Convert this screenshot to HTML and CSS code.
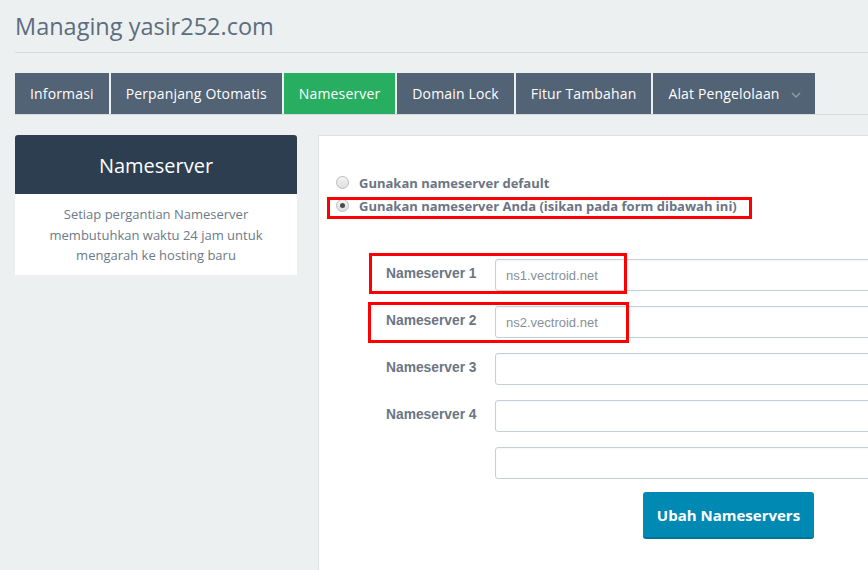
FILE: index.html
```html
<!DOCTYPE html>
<html lang="id">
<head>
    <meta charset="UTF-8">
    <title>Managing yasir252.com</title>
    <link rel="stylesheet" href="styles.css">
</head>
<body>
    <h1 class="page-title">Managing yasir252.com</h1>

    <ul class="tabs">
        <li class="tab">Informasi</li>
        <li class="tab">Perpanjang Otomatis</li>
        <li class="tab active">Nameserver</li>
        <li class="tab">Domain Lock</li>
        <li class="tab">Fitur Tambahan</li>
        <li class="tab dropdown">Alat Pengelolaan
            <svg class="caret" width="10" height="6" viewBox="0 0 10 6"><polyline points="1,1 5,5 9,1" fill="none" stroke="#8a97a5" stroke-width="1.6"/></svg>
        </li>
    </ul>

    <div class="layout">
        <div class="side-panel">
            <div class="side-head">Nameserver</div>
            <div class="side-body">Setiap pergantian Nameserver membutuhkan waktu 24 jam untuk mengarah ke hosting baru</div>
        </div>

        <div class="main-panel">
            <div class="radio-row"><span class="radio"></span>Gunakan nameserver default</div>
            <div class="radio-row"><span class="radio checked"></span>Gunakan nameserver Anda (isikan pada form dibawah ini)</div>

            <div class="ns-form">
                <div class="ns-row"><label>Nameserver 1</label><input type="text" value="ns1.vectroid.net"></div>
                <div class="ns-row"><label>Nameserver 2</label><input type="text" value="ns2.vectroid.net"></div>
                <div class="ns-row"><label>Nameserver 3</label><input type="text"></div>
                <div class="ns-row"><label>Nameserver 4</label><input type="text"></div>
                <div class="ns-row"><label></label><input type="text"></div>
                <button class="btn-submit">Ubah Nameservers</button>
            </div>

            <!-- annotation boxes -->
            <div class="mark mark-radio"></div>
            <div class="mark mark-ns1"></div>
            <div class="mark mark-ns2"></div>
        </div>
    </div>
</body>
</html>
```

FILE: styles.css
```css
html, body {
    margin: 0;
    height: 570px;
    overflow: hidden;
}
body {
    background-color: #ecf0f1;
    font-family: "Open Sans", Arial, sans-serif;
    padding: 0 0 0 15px;
    width: 853px;
}
.page-title {
    margin: 10px 0 0;
    padding-bottom: 9px;
    font-size: 23.5px;
    line-height: 33px;
    font-weight: normal;
    color: #5d6d7e;
    border-bottom: 1px solid #d6dade;
}
.tabs {
    list-style: none;
    margin: 20px 0 0;
    padding: 0;
    display: flex;
    gap: 2px;
    border-bottom: 1px solid #d6dade;
}
.tab {
    height: 41px;
    line-height: 41px;
    padding: 0 15px;
    background-color: #526375;
    color: #fff;
    font-size: 14px;
    letter-spacing: 0.15px;
}
.tab.active {
    background-color: #27ae60;
}
.tab.dropdown {
    padding-right: 14px;
    display: flex;
    align-items: center;
    gap: 11px;
}
.caret {
    margin-top: 2px;
}
.layout {
    display: flex;
    gap: 21px;
    margin-top: 20px;
}
.side-panel {
    width: 282px;
    flex: none;
    align-self: flex-start;
}
.side-head {
    background-color: #2c3e50;
    color: #fff;
    height: 59px;
    line-height: 62px;
    text-align: center;
    font-size: 20px;
    border-radius: 3px 3px 0 0;
}
.side-body {
    background-color: #fff;
    color: #6c7a89;
    font-size: 13px;
    line-height: 20.5px;
    text-align: center;
    padding: 10px 22px 9px;
}
.main-panel {
    position: relative;
    width: 620px;
    flex: none;
    height: 460px;
    background-color: #fff;
    border: 1px solid #dde2e5;
    padding: 35px 17px 0;
}
.radio-row {
    display: flex;
    align-items: center;
    height: 23px;
    font-size: 13px;
    font-weight: bold;
    color: #6b7583;
}
.radio {
    width: 11px;
    height: 11px;
    border: 1px solid #b9bcbf;
    border-radius: 50%;
    background: linear-gradient(#f4f4f4, #dedede);
    margin-right: 10px;
    position: relative;
}
.radio.checked::after {
    content: "";
    position: absolute;
    left: 3px;
    top: 3px;
    width: 5px;
    height: 5px;
    border-radius: 50%;
    background-color: #4a4a4a;
}
.ns-form {
    margin: 42px 0 0 50px;
}
.ns-row {
    display: flex;
    align-items: center;
    margin-bottom: 15px;
}
.ns-row label {
    width: 109px;
    flex: none;
    margin-top: -3px;
    font-family: "Liberation Sans", Arial, sans-serif;
    font-size: 13.8px;
    font-weight: bold;
    color: #6b7583;
}
.ns-row input {
    width: 440px;
    height: 32px;
    box-sizing: border-box;
    border: 1px solid #c5cfd7;
    border-radius: 3px;
    padding: 0 10px;
    font-family: "Liberation Sans", Arial, sans-serif;
    font-size: 13px;
    color: #868f98;
    box-shadow: inset 0 1px 2px rgba(0, 0, 0, 0.04);
}
.btn-submit {
    margin: -2px 0 0 257px;
    width: 171px;
    height: 47px;
    background-color: #0089b3;
    border: none;
    border-bottom: 2px solid #00739a;
    border-radius: 3px;
    color: #fff;
    font-family: "Open Sans", Arial, sans-serif;
    font-size: 15px;
    font-weight: bold;
}
.mark {
    position: absolute;
    border: 3px solid #f00;
}
.mark-radio {
    left: 8px;
    top: 61px;
    width: 419px;
    height: 16px;
}
.mark-ns1 {
    left: 50px;
    top: 117px;
    width: 252px;
    height: 35px;
}
.mark-ns2 {
    left: 49px;
    top: 166px;
    width: 255px;
    height: 35px;
}
```
